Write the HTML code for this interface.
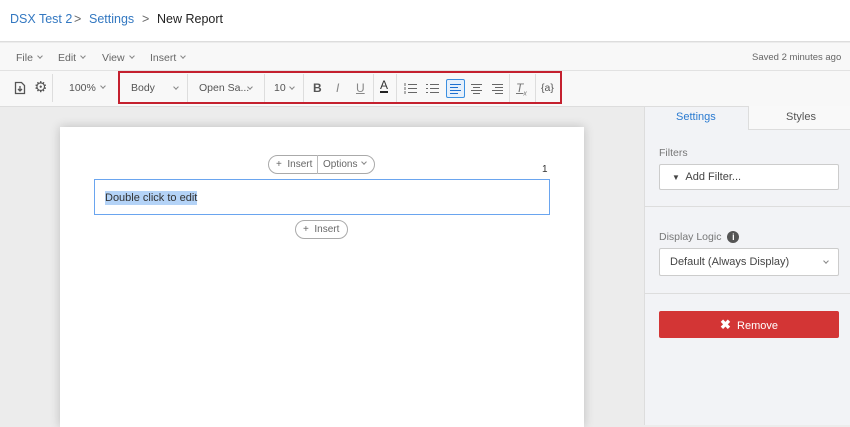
<!DOCTYPE html><html><head><style>
*{box-sizing:border-box;margin:0;padding:0}
body{width:850px;height:425px;overflow:hidden;font-family:"Liberation Sans",sans-serif;background:#ececec;position:relative;font-size:11px;color:#555}
.a{position:absolute;white-space:nowrap}
.sep{position:absolute;top:74px;width:1px;height:28px;background:#ddd}
.t{position:absolute;top:82px;font-size:10.5px;color:#555;white-space:nowrap}
.cv{display:inline-block;width:4px;height:4px;border-right:1px solid #888;border-bottom:1px solid #888;transform:rotate(45deg);margin-left:5px;vertical-align:3px}
.ca{position:absolute;width:4px;height:4px;border-right:1px solid #888;border-bottom:1px solid #888;transform:rotate(45deg)}
</style></head><body>
<div class="a" style="left:0;top:0;width:850px;height:42px;background:#fff;border-bottom:1px solid #ddd"></div>
<div class="a" style="left:10px;top:12px;font-size:12.5px;color:#3378c1">DSX Test 2</div>
<div class="a" style="left:74px;top:12px;font-size:12.5px;color:#666">&gt;</div>
<div class="a" style="left:89px;top:12px;font-size:12.5px;color:#3378c1">Settings</div>
<div class="a" style="left:142px;top:12px;font-size:12.5px;color:#666">&gt;</div>
<div class="a" style="left:157px;top:12px;font-size:12.5px;color:#222">New Report</div>
<div class="a" style="left:0;top:43px;width:850px;height:64px;background:#f8f8f8;border-bottom:1px solid #ddd"></div>
<div class="a" style="left:0;top:70px;width:850px;height:1px;background:#e2e2e2"></div>
<div class="a" style="left:16px;top:52px;color:#666;font-size:10.5px">File<span class="cv"></span></div>
<div class="a" style="left:58px;top:52px;color:#666;font-size:10.5px">Edit<span class="cv"></span></div>
<div class="a" style="left:102px;top:52px;color:#666;font-size:10.5px">View<span class="cv"></span></div>
<div class="a" style="left:150px;top:52px;color:#666;font-size:10.5px">Insert<span class="cv"></span></div>
<div class="a" style="left:752px;top:52px;color:#666;font-size:9.5px">Saved 2 minutes ago</div>
<svg class="a" style="left:13px;top:81px" width="14" height="14" viewBox="0 0 14 14"><path d="M2.5 1.5h6l3 3v8h-9z" fill="none" stroke="#555" stroke-width="1.3"/><path d="M7 5v5M5 8l2 2 2-2" fill="none" stroke="#555" stroke-width="1.3"/></svg>
<div class="a" style="left:34px;top:78px;font-size:15px;color:#555">⚙</div>
<div class="sep" style="left:52px"></div>
<div class="t" style="left:69px">100%<span class="cv"></span></div>
<div class="a" style="left:118px;top:71px;width:444px;height:33px;border:2px solid #c4202e"></div>
<div class="t" style="left:131px">Body</div><div class="ca" style="left:174px;top:85px"></div>
<div class="sep" style="left:187px"></div>
<div class="t" style="left:199px">Open Sa...</div><div class="ca" style="left:248px;top:85px"></div>
<div class="sep" style="left:264px"></div>
<div class="t" style="left:274px">10</div><div class="ca" style="left:290px;top:85px"></div>
<div class="sep" style="left:303px"></div>
<div class="t" style="left:313px;font-weight:bold;font-size:12px;top:81px">B</div>
<div class="t" style="left:336px;font-style:italic;font-size:12px;top:81px;color:#888">I</div>
<div class="t" style="left:356px;text-decoration:underline;font-size:12px;top:81px;color:#888">U</div>
<div class="sep" style="left:373px"></div>
<div class="t" style="left:380px;font-size:12px;top:80px;color:#333;border-bottom:2px solid #222;line-height:11px">A</div>
<div class="sep" style="left:396px"></div>
<svg class="a" style="left:404px;top:83px" width="13" height="11"><path d="M4 1.5h9M4 5.5h9M4 9.5h9" stroke="#666"/><path d="M1 0v3M1 4v3M1 8v3" stroke="#666"/></svg>
<svg class="a" style="left:426px;top:83px" width="13" height="11"><path d="M4 1.5h9M4 5.5h9M4 9.5h9M0 1.5h2M0 5.5h2M0 9.5h2" stroke="#666"/></svg>
<div class="a" style="left:446px;top:79px;width:19px;height:19px;border:1px solid #3b8fe0;border-radius:2px;background:#e6f0fb"></div>
<svg class="a" style="left:450px;top:83px" width="12" height="11"><path d="M0 1.5h11M0 4.5h8M0 7.5h11M0 10.5h8" stroke="#1d6fd0"/></svg>
<svg class="a" style="left:471px;top:83px" width="12" height="11"><path d="M0 1.5h11M2 4.5h7M0 7.5h11M2 10.5h7" stroke="#666"/></svg>
<svg class="a" style="left:492px;top:83px" width="12" height="11"><path d="M0 1.5h11M3 4.5h8M0 7.5h11M3 10.5h8" stroke="#666"/></svg>
<div class="sep" style="left:509px"></div>
<div class="t" style="left:516px;font-style:italic;text-decoration:underline;font-size:12px;top:81px;color:#777">T<sub style="font-size:7px">x</sub></div>
<div class="sep" style="left:535px"></div>
<div class="t" style="left:541px;color:#555">{a}</div>
<div class="a" style="left:60px;top:127px;width:524px;height:300px;background:#fff;box-shadow:0 0 10px rgba(0,0,0,.2)"></div>
<div class="a" style="left:268px;top:155px;width:107px;height:19px;border:1px solid #aaa;border-radius:10px;background:#fff"></div>
<div class="a" style="left:317px;top:155px;width:1px;height:19px;background:#bbb"></div>
<div class="a" style="left:276px;top:155px;font-size:10px;line-height:19px;color:#666">+ &nbsp;Insert</div>
<div class="a" style="left:323px;top:155px;font-size:10px;line-height:19px;color:#666">Options<span class="cv"></span></div>
<div class="a" style="left:542px;top:164px;font-size:10px;color:#333">1</div>
<div class="a" style="left:94px;top:179px;width:456px;height:36px;border:1px solid #6aa5ef"></div>
<div class="a" style="left:105px;top:191px;font-size:11px;color:#333;background:#b4d3f7;line-height:14px">Double click to edit</div>
<div class="a" style="left:295px;top:220px;width:53px;height:19px;border:1px solid #aaa;border-radius:10px;background:#fff"></div>
<div class="a" style="left:303px;top:220px;font-size:10px;line-height:19px;color:#666">+ &nbsp;Insert</div>
<div class="a" style="left:644px;top:107px;width:206px;height:318px;background:#f2f3f6;border-left:1px solid #ddd"></div>
<div class="a" style="left:748px;top:106px;width:102px;height:24px;background:#f9f9f9;border-left:1px solid #ddd;border-bottom:1px solid #ddd"></div>
<div class="a" style="left:676px;top:111px;font-size:11px;color:#2a7ad0">Settings</div>
<div class="a" style="left:786px;top:111px;font-size:11px;color:#555">Styles</div>
<div class="a" style="left:659px;top:147px;font-size:10.5px;color:#777">Filters</div>
<div class="a" style="left:659px;top:164px;width:180px;height:26px;border:1px solid #ccc;border-radius:2px;background:#fff"></div>
<div class="a" style="left:672px;top:171px;font-size:11px;color:#444"><span style="font-size:8px">▼</span>&nbsp; Add Filter...</div>
<div class="a" style="left:645px;top:206px;width:205px;height:1px;background:#ddd"></div>
<div class="a" style="left:659px;top:231px;font-size:10.5px;color:#777">Display Logic <span style="display:inline-block;width:12px;height:12px;border-radius:6px;background:#555;color:#fff;font-size:9px;text-align:center;line-height:12px;font-weight:bold;margin-left:3px">i</span></div>
<div class="a" style="left:659px;top:248px;width:180px;height:28px;border:1px solid #ccc;border-radius:2px;background:#fff"></div>
<div class="a" style="left:670px;top:256px;font-size:11px;color:#444">Default (Always Display)</div>
<div class="ca" style="left:824px;top:259px"></div>
<div class="a" style="left:645px;top:293px;width:205px;height:1px;background:#ddd"></div>
<div class="a" style="left:659px;top:311px;width:180px;height:27px;background:#d33535;border-radius:2px;color:#fff;font-size:11px;text-align:center;line-height:27px"><b style="font-size:13px">✖</b>&nbsp; Remove</div>
</body></html>
